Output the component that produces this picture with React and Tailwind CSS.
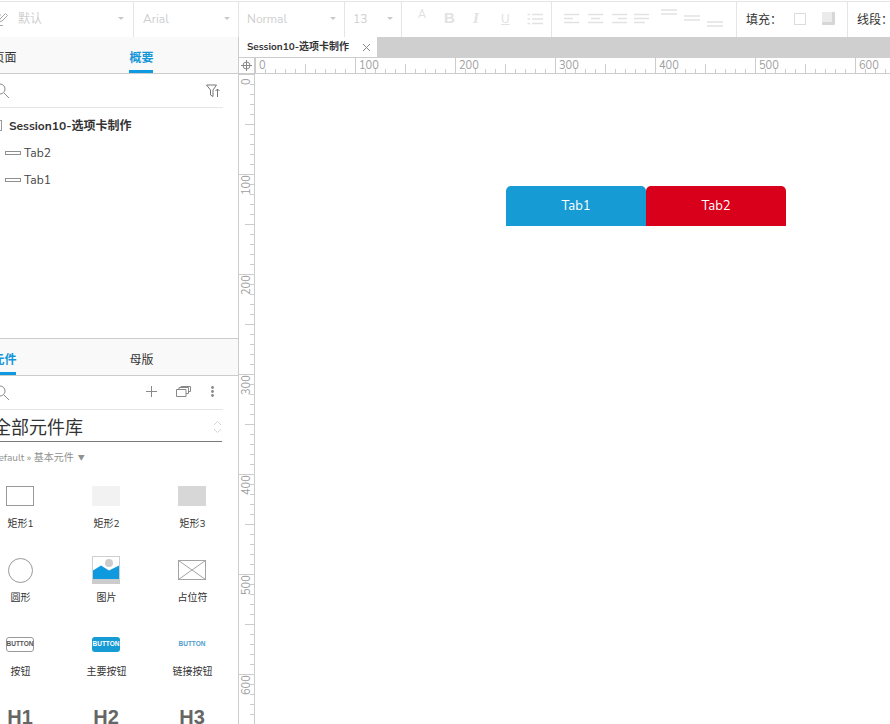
const FONT = "font-['Nunito_Sans','Open_Sans','Noto_Sans_CJK_SC',sans-serif]";

function Caret() {
  return <span className="w-0 h-0 border-x-[3px] border-x-transparent border-t-[3px] border-t-[#c9c9c9]" />;
}

function Select({ w, pl, pr, label, cls }) {
  return (
    <div className={`${w} ${pl} ${pr} pb-[2px] h-full shrink-0 flex items-center justify-between border-r border-[#e5e5e5]`}>
      <span className={`text-[12px] text-[#cfcfcf] ${cls || ''}`}>{label}</span>
      <Caret />
    </div>
  );
}

function Lines({ rows, w = 15 }) {
  return (
    <svg width={w} height="12" viewBox={`0 0 ${w} 12`}>
      {rows.map(([x1, x2, y], i) => <line key={i} x1={x1} x2={x2} y1={y} y2={y} stroke="#e2e2e2" strokeWidth="1.5" />)}
    </svg>
  );
}

function Toolbar() {
  return (
    <div className="h-[37px] shrink-0 mt-px border-y border-[#e5e5e5] flex items-stretch bg-white -mb-px">
      <div className="w-[134px] h-full shrink-0 flex items-center pl-[18px] pr-[9px] pb-[2px] justify-between border-r border-[#e5e5e5] relative">
        <svg className="absolute left-[-5px] top-[10px]" width="14" height="15" viewBox="0 0 14 15" fill="none" stroke="#a8a8a8">
          <path d="M4 10l1-3 5.500-5.500 2 2L7 9l-3 1zM0 13.500h8M6 3H1v8" />
        </svg>
        <span className="text-[12px] text-[#cfcfcf]">默认</span>
        <Caret />
      </div>
      <Select w="w-[105px]" pl="pl-[9px]" pr="pr-[8px]" label="Arial" />
      <Select w="w-[106px]" pl="pl-[8px]" pr="pr-[8px]" label="Normal" />
      <Select w="w-[57px]" pl="pl-[8px]" pr="pr-[8px]" label="13" />
      <div className="w-[150px] h-full shrink-0 border-r border-[#e5e5e5] flex items-center pl-[15px] pb-[2px]">
        <span className="w-[27px] text-[11px] text-[#dfdfdf] -mt-[6px] pl-[1px]">A</span>
        <span className="w-[29px] text-[15px] font-bold text-[#e2e2e2] font-['Liberation_Sans']">B</span>
        <span className="w-[28px] text-[15px] italic font-bold text-[#e2e2e2] font-['Liberation_Serif']">I</span>
        <span className="w-[26px] text-[12px] underline text-[#e2e2e2] font-['Liberation_Sans']">U</span>
        <svg width="16" height="12" viewBox="0 0 16 12" stroke="#e2e2e2" strokeWidth="1.5">
          <path d="M5 1.500h11M5 6h11M5 10.500h11M0.500 1.500h2.500M0.500 6h2.500M0.500 10.500h2.500" />
        </svg>
      </div>
      <div className="w-[185px] h-full shrink-0 border-r border-[#e5e5e5] flex items-center pl-[12px] pb-[1px]">
        <div className="w-[24px]"><Lines rows={[[0, 15, 1.5], [0, 9, 5.5], [0, 15, 9.5]]} /></div>
        <div className="w-[24px]"><Lines rows={[[0, 15, 1.5], [3, 12, 5.5], [0, 15, 9.5]]} /></div>
        <div className="w-[22px]"><Lines rows={[[0, 15, 1.5], [6, 15, 5.5], [0, 15, 9.5]]} /></div>
        <div className="w-[27px]"><Lines rows={[[0, 15, 1.5], [0, 15, 5.5], [0, 11, 9.5]]} /></div>
        <div className="w-[23px] -mt-[9px]"><Lines w={17} rows={[[0, 16, 1], [0, 16, 5]]} /></div>
        <div className="w-[23px]"><Lines w={17} rows={[[0, 16, 3], [0, 16, 7]]} /></div>
        <div className="mt-[8px]"><Lines w={17} rows={[[0, 16, 5], [0, 16, 9]]} /></div>
      </div>
      <div className="w-[111px] h-full shrink-0 border-r border-[#e5e5e5] flex items-center pl-[9px]">
        <span className="w-[48px] text-[12px] text-[#333]">填充：</span>
        <span className="w-[12px] h-[12px] border border-[#dcdcdc] -mt-[2px]" />
        <span className="relative w-[13px] h-[13px] ml-[16px] -mt-[2px] bg-[#d7d7d7] rounded-[1px] overflow-hidden">
          <span className="absolute left-0 top-0 w-[10px] h-[10px] bg-[#ebebeb]" />
        </span>
      </div>
      <div className="flex-1 flex items-center pl-[9px]">
        <span className="text-[12px] text-[#333] whitespace-nowrap">线段：</span>
      </div>
    </div>
  );
}

function TabsRow({ left, right, activeLeft }) {
  return (
    <div className="h-[37px] shrink-0 bg-[#f9f9f9] border-b border-[#cccccc] overflow-hidden">
      <div className="flex -ml-[64px] h-full">
        {[left, right].map((t, i) => {
          const active = activeLeft ? i === 0 : i === 1;
          return (
            <div key={t} className="w-[137px] h-full shrink-0 flex justify-center relative">
              <span className={`mt-[13px] text-[12px] leading-[17px] ${active ? 'text-[#1396d8] font-semibold' : 'text-[#333]'}`}>{t}</span>
              {active && <span className="absolute bottom-0 left-[56px] w-[24px] h-[3px] bg-[#0e9ae0]" />}
            </div>
          );
        })}
      </div>
    </div>
  );
}

function SearchIcon() {
  return (
    <svg className="absolute left-[-6px] top-[9px]" width="16" height="16" viewBox="0 0 16 16" fill="none" stroke="#8a8a8a">
      <circle cx="6" cy="6" r="5" />
      <path d="M10 10l5 5" />
    </svg>
  );
}

function Outline() {
  return (
    <div className="h-[301px] shrink-0 flex flex-col overflow-hidden">
      <TabsRow left="页面" right="概要" />
      <div className="h-[34px] w-[223px] shrink-0 border-b border-[#e5e5e5] relative flex justify-end items-center pr-[2px]">
        <SearchIcon />
        <svg width="15" height="14" viewBox="0 0 15 14" fill="none" stroke="#777">
          <path d="M0.500 1h10L7 6v6.500L4.500 11V6zM11.500 13V5M9.500 7l2-2 2 2" />
        </svg>
      </div>
      <div className="flex items-center h-[36px] relative pl-[9px]">
        <span className="absolute -left-[7px] top-[12px] w-[9px] h-[11px] border border-[#999]" />
        <span className="text-[12px] font-bold text-[#333] whitespace-nowrap">Session10-选项卡制作</span>
      </div>
      {['Tab2', 'Tab1'].map(t => (
        <div key={t} className="flex items-center h-[27px] pl-[5px] -mt-[5px] mb-[5px]">
          <span className="w-[16px] h-[4px] border border-[#8f8f8f] mr-[3px]" />
          <span className="text-[12px] text-[#444]">{t}</span>
        </div>
      ))}
    </div>
  );
}

function Rect1() { return <span className="block w-[28px] h-[20px] border border-[#999]" />; }
function Rect2() { return <span className="block w-[28px] h-[20px] bg-[#f2f2f2]" />; }
function Rect3() { return <span className="block w-[28px] h-[20px] bg-[#d7d7d7]" />; }
function Circle() { return <span className="block w-[25px] h-[25px] rounded-full border border-[#999]" />; }
function Picture() {
  return (
    <svg width="28" height="28" viewBox="0 0 28 28">
      <rect x="0.500" y="0.500" width="27" height="27" fill="#fff" stroke="#cfcfcf" />
      <rect y="23" width="28" height="5" fill="#cccccc" />
      <circle cx="17" cy="7" r="4" fill="#cccccc" />
      <path d="M1 23V14.500L9 9.500l8 5 10-5V23z" fill="#0f9ae0" />
    </svg>
  );
}
function Placeholder() {
  return (
    <svg width="28" height="20" viewBox="0 0 28 20" fill="none" stroke="#a3a3a3">
      <rect x="0.500" y="0.500" width="27" height="19" />
      <path d="M0.500 0.500L27.500 19.500M27.500 0.500L0.500 19.500" />
    </svg>
  );
}
function Btn({ cls }) {
  return <span className={`flex items-center justify-center w-[28px] h-[15px] rounded-[3px] text-[6.500px] font-bold font-['Liberation_Sans'] ${cls}`}>BUTTON</span>;
}

const WIDGETS = [
  ['矩形1', <Rect1 />], ['矩形2', <Rect2 />], ['矩形3', <Rect3 />],
  ['圆形', <Circle />], ['图片', <Picture />], ['占位符', <Placeholder />],
  ['按钮', <Btn cls="border border-[#999] text-[#555]" />], ['主要按钮', <Btn cls="bg-[#169bd5] text-white" />], ['链接按钮', <Btn cls="text-[#4c9ccc]" />],
];

function Library() {
  return (
    <div className="flex-1 min-h-0 flex flex-col overflow-hidden">
      <div className="border-t border-[#cccccc]" />
      <TabsRow left="元件" right="母版" activeLeft />
      <div className="h-[34px] w-[223px] shrink-0 border-b border-[#e5e5e5] relative flex justify-end items-center pr-[9px] pb-[2px] gap-[19px]">
        <SearchIcon />
        <svg width="11" height="11" viewBox="0 0 11 11" stroke="#888"><path d="M5.500 0v11M0 5.500h11" /></svg>
        <svg width="15" height="11" viewBox="0 0 15 11" fill="none" stroke="#888"><path d="M0.500 3.500h9.500v7H0.500zM3 3.500V1.500h9.500v6H10M5 1.500V0.500h9.500v5H12.500" /></svg>
        <svg className="ml-[1px]" width="3" height="11" viewBox="0 0 3 11" fill="#888"><circle cx="1.500" cy="1.500" r="1.400" /><circle cx="1.500" cy="5.500" r="1.400" /><circle cx="1.500" cy="9.500" r="1.400" /></svg>
      </div>
      <div className="h-[32px] w-[222px] shrink-0 border-b border-[#797979] relative flex items-center overflow-hidden">
        <span className="text-[18px] text-[#333] -ml-[7px] mt-[4px] whitespace-nowrap leading-[24px]">全部元件库</span>
        <svg className="absolute right-0 top-[10px]" width="9" height="14" viewBox="0 0 9 14" fill="none" stroke="#d5d5d5">
          <path d="M1 5l3.500-3.500L8 5M1 9l3.500 3.500L8 9" />
        </svg>
      </div>
      <div className="h-[33px] shrink-0 flex items-center -ml-[9px] text-[10px] text-[#909090] whitespace-nowrap">
        <span>Default » 基本元件</span>
        <span className="ml-[4px] text-[7px]">▼</span>
      </div>
      <div className="-ml-[23px] mt-[7px] w-[258px] grid grid-cols-3 auto-rows-[74px] shrink-0">
        {WIDGETS.map(([label, icon]) => (
          <div key={label} className="flex flex-col items-center relative">
            <div className="h-[28px] flex items-center justify-center">{icon}</div>
            <span className="mt-[7px] ml-[1px] text-[10px] leading-[14px] text-[#333] whitespace-nowrap">{label}</span>
          </div>
        ))}
        {['H1', 'H2', 'H3'].map(h => (
          <div key={h} className="flex justify-center">
            <span className="-mt-[1px] text-[20px] leading-[28px] font-bold text-[#666] font-['Liberation_Sans']">{h}</span>
          </div>
        ))}
      </div>
    </div>
  );
}

function HRuler() {
  const ticks = [];
  const labels = [];
  for (let i = 0; i <= 64; i++) {
    const x = i * 10 + 0.5;
    const major = i % 10 === 0;
    const mid = i % 5 === 0;
    ticks.push(<line key={i} x1={x} x2={x} y1={major ? 0 : mid ? 6 : 11} y2="15" stroke="#cccccc" />);
    if (major) labels.push(<text key={`t${i}`} x={i * 10 + 4} y="11" fontSize="11" fill="#a0a0a0">{i * 10}</text>);
  }
  return <svg className="block" width="635" height="15">{ticks}{labels}</svg>;
}

function VRuler() {
  const ticks = [];
  const labels = [];
  for (let i = 0; i <= 65; i++) {
    const y = i * 10 + 0.5;
    const major = i % 10 === 0;
    const mid = i % 5 === 0;
    ticks.push(<line key={i} y1={y} y2={y} x1={major ? 0 : mid ? 6 : 11} x2="15" stroke="#cccccc" />);
    if (major) labels.push(<text key={`t${i}`} transform={`translate(11 ${i * 10 + (i === 0 ? 11 : 21)}) rotate(-90)`} fontSize="11" fill="#a0a0a0">{i * 10}</text>);
  }
  return <svg className="block" width="15" height="650">{ticks}{labels}</svg>;
}

export default function App() {
  return (
    <div className={`w-[890px] h-[724px] overflow-hidden flex flex-col bg-white ${FONT}`}>
      <Toolbar />
      <div className="flex flex-1 min-h-0">
        <div className="w-[239px] shrink-0 border-r border-[#cccccc] flex flex-col">
          <Outline />
          <Library />
        </div>
        <div className="flex-1 min-w-0 flex flex-col overflow-hidden">
          <div className="h-[21px] shrink-0 bg-[#cfcfcf] flex">
            <div className="w-[138px] h-[21px] bg-white flex items-center pl-[8px] justify-between pr-[7px] border-b border-[#cccccc]">
              <span className="text-[10px] font-bold text-[#333] whitespace-nowrap">Session10-选项卡制作</span>
              <svg width="7" height="7" viewBox="0 0 7 7" stroke="#888"><path d="M0 0l7 7M7 0L0 7" /></svg>
            </div>
          </div>
          <div className="h-[15px] shrink-0 flex border-b border-[#cccccc] box-content">
            <div className="w-[16px] shrink-0 border-r border-[#cccccc] flex items-center justify-center">
              <svg width="11" height="11" viewBox="0 0 11 11" fill="none" stroke="#888"><circle cx="5.500" cy="5.500" r="3.500" /><path d="M5.500 0v11M0 5.500h11" /></svg>
            </div>
            <HRuler />
          </div>
          <div className="flex-1 min-h-0 flex">
            <div className="w-[16px] shrink-0 border-r border-[#cccccc]"><VRuler /></div>
            <div className="flex-1 pl-[251px] pt-[112px]">
              <div className="flex">
                <div className="w-[140px] h-[40px] pt-[1px] bg-[#169bd5] rounded-t-[5px] flex items-center justify-center text-[13px] text-white">Tab1</div>
                <div className="w-[140px] h-[40px] pt-[1px] bg-[#d9001b] rounded-t-[5px] flex items-center justify-center text-[13px] text-white">Tab2</div>
              </div>
            </div>
          </div>
        </div>
      </div>
    </div>
  );
}
